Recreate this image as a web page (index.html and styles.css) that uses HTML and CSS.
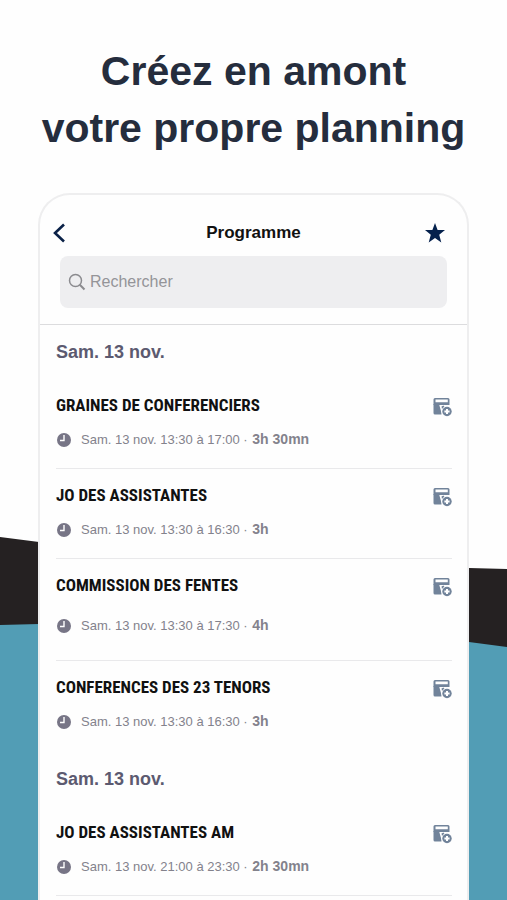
FILE: index.html
```html
<!DOCTYPE html>
<html lang="fr">
<head>
    <meta charset="UTF-8">
    <meta name="viewport" content="width=device-width, initial-scale=1.0">
    <title>Programme</title>
    <link rel="stylesheet" href="styles.css">
</head>
<body>
    <!-- shared icons -->
    <svg class="icon-defs" aria-hidden="true">
        <symbol id="clock" viewBox="0 0 14 14">
            <circle cx="7" cy="7" r="7" fill="#777586"/>
            <path d="M7 2V7.500H3" fill="none" stroke="#fff" stroke-width="1.400"/>
        </symbol>
        <symbol id="add" viewBox="0 0 20 20">
            <path fill="#71839a" fill-rule="evenodd" d="M3 1H16Q17.500 1 17.500 2.500V8H1.500V2.500Q1.500 1 3 1ZM3.500 2.600V5.300H15.800V2.600Z"/>
            <path fill="#71839a" d="M1.500 7H7L8 10.500L9 14L9.500 17.500H3Q1.500 17.500 1.500 16Z"/>
            <path fill="#71839a" d="M9.500 9.500L11.500 8.500L12.500 10L10 12Z"/>
            <circle cx="15" cy="14.500" r="5.400" fill="#fefefe"/>
            <circle cx="15" cy="14.500" r="4.700" fill="#71839a"/>
            <path d="M15 11.900V17.100M12.400 14.500H17.600" stroke="#fff" stroke-width="2"/>
        </symbol>
    </svg>

    <div class="page">
        <svg class="backdrop" viewBox="0 0 507 900" preserveAspectRatio="none" aria-hidden="true">
            <polygon points="0,537 39,542 469,568 507,569 507,900 0,900" fill="#252122"/>
            <polygon points="0,625 39,624 469,642 507,647 507,900 0,900" fill="#529db5"/>
        </svg>

        <h1 class="headline">Créez en amont<br>votre propre planning</h1>

        <main class="phone">
            <header class="top">
                <div class="nav">
                    <button class="icon-btn" type="button" aria-label="Retour">
                        <svg width="20" height="20" viewBox="0 0 20 20"><path d="M14 1.500L5 10L14 18.500" fill="none" stroke="#0a2147" stroke-width="2.600"/></svg>
                    </button>
                    <h2 class="nav-title">Programme</h2>
                    <button class="icon-btn" type="button" aria-label="Favoris">
                        <svg width="20" height="20" viewBox="0 0 20 20"><path d="M10 0L12.600 7H20L14.200 11.700L16.300 19.500L10 15L3.700 19.500L5.800 11.700L0 7H7.400Z" fill="#05214d"/></svg>
                    </button>
                </div>
                <label class="search">
                    <svg width="18" height="18" viewBox="0 0 18 18" aria-hidden="true"><circle cx="7.500" cy="7.500" r="6" fill="none" stroke="#8b8b8f" stroke-width="1.500"/><path d="M11.800 11.800L16.500 16.500" stroke="#8b8b8f" stroke-width="2"/></svg>
                    <input type="search" placeholder="Rechercher" aria-label="Rechercher">
                </label>
            </header>

            <section class="day">
                <h3 class="day-title">Sam. 13 nov.</h3>
                <article class="event">
                    <div class="event-head">
                        <h4>GRAINES DE CONFERENCIERS</h4>
                        <button class="icon-btn" type="button" aria-label="Ajouter au planning"><svg width="20" height="20"><use href="#add"/></svg></button>
                    </div>
                    <p class="meta"><svg width="14" height="14"><use href="#clock"/></svg><span>Sam. 13 nov. 13:30 à 17:00 · <b>3h 30mn</b></span></p>
                </article>
                <article class="event">
                    <div class="event-head">
                        <h4>JO DES ASSISTANTES</h4>
                        <button class="icon-btn" type="button" aria-label="Ajouter au planning"><svg width="20" height="20"><use href="#add"/></svg></button>
                    </div>
                    <p class="meta"><svg width="14" height="14"><use href="#clock"/></svg><span>Sam. 13 nov. 13:30 à 16:30 · <b>3h</b></span></p>
                </article>
                <article class="event tall">
                    <div class="event-head">
                        <h4>COMMISSION DES FENTES</h4>
                        <button class="icon-btn" type="button" aria-label="Ajouter au planning"><svg width="20" height="20"><use href="#add"/></svg></button>
                    </div>
                    <p class="meta"><svg width="14" height="14"><use href="#clock"/></svg><span>Sam. 13 nov. 13:30 à 17:30 · <b>4h</b></span></p>
                </article>
                <article class="event last">
                    <div class="event-head">
                        <h4>CONFERENCES DES 23 TENORS</h4>
                        <button class="icon-btn" type="button" aria-label="Ajouter au planning"><svg width="20" height="20"><use href="#add"/></svg></button>
                    </div>
                    <p class="meta"><svg width="14" height="14"><use href="#clock"/></svg><span>Sam. 13 nov. 13:30 à 16:30 · <b>3h</b></span></p>
                </article>
            </section>

            <section class="day">
                <h3 class="day-title">Sam. 13 nov.</h3>
                <article class="event">
                    <div class="event-head">
                        <h4>JO DES ASSISTANTES AM</h4>
                        <button class="icon-btn" type="button" aria-label="Ajouter au planning"><svg width="20" height="20"><use href="#add"/></svg></button>
                    </div>
                    <p class="meta"><svg width="14" height="14"><use href="#clock"/></svg><span>Sam. 13 nov. 21:00 à 23:30 · <b>2h 30mn</b></span></p>
                </article>
            </section>
        </main>
    </div>
</body>
</html>
```
FILE: styles.css
```css
* {
    box-sizing: border-box;
}

body {
    margin: 0;
    font-family: "Liberation Sans", Arial, sans-serif;
    background-color: #fefefe;
}

h1, h2, h3, h4, p {
    margin: 0;
}

.icon-defs {
    display: none;
}

.page {
    position: relative;
    display: flex;
    flex-direction: column;
    height: 100vh;
    overflow: hidden;
}

.backdrop {
    position: absolute;
    inset: 0;
    width: 100%;
    height: 100%;
    z-index: -1;
}

.headline {
    padding: 43px 0 36px;
    text-align: center;
    font-size: 41px;
    line-height: 57px;
    white-space: nowrap;
    color: #252d3d;
}

.phone {
    flex: 1;
    margin: 0 38px;
    background: #fefefe;
    border: 2px solid #eeeeef;
    border-bottom: 0;
    border-radius: 32px 32px 0 0;
}

.top {
    padding: 26px 20px 16px;
    border-bottom: 1px solid #dcdcde;
}

.nav {
    display: flex;
    justify-content: space-between;
    align-items: center;
    height: 24px;
    margin: 0 2px 11px -10px;
}

.nav-title {
    flex: 1;
    padding-left: 12px;
    text-align: center;
    font-size: 17px;
    line-height: 24px;
    color: #111;
}

.icon-btn {
    display: flex;
    padding: 0;
    border: 0;
    background: none;
    cursor: pointer;
}

.search {
    display: flex;
    align-items: center;
    gap: 4px;
    height: 52px;
    padding: 0 8px;
    border-radius: 8px;
    background: #eeeef0;
}

.search input {
    flex: 1;
    min-width: 0;
    padding: 0;
    border: 0;
    outline: 0;
    background: none;
    font: inherit;
    font-size: 16px;
}

.search input::placeholder {
    color: #949498;
    opacity: 1;
}

.day {
    padding: 0 15px 0 16px;
}

.day-title {
    padding: 15px 0;
    font-size: 18px;
    line-height: 24px;
    color: #5c5a70;
}

.event {
    padding: 14px 0 20px;
    border-bottom: 1px solid #e9e9eb;
}

.event-head {
    display: flex;
    justify-content: space-between;
    align-items: center;
    height: 24px;
    margin-bottom: 14px;
}

.event-head .icon-btn {
    align-self: flex-end;
}

.event-head h4 {
    font-family: "Roboto Condensed", "Arial Narrow", sans-serif;
    font-size: 17px;
    color: #111;
}

.meta {
    display: flex;
    align-items: center;
    gap: 10px;
    padding-left: 1px;
    font-size: 13px;
    line-height: 17px;
    color: #83828c;
}

.meta b {
    padding-left: 1px;
    font-size: 14px;
}

.tall {
    padding-bottom: 26px;
}

.tall .event-head {
    margin-bottom: 20px;
}

.last {
    padding-bottom: 22px;
    border-bottom: 0;
}
```
